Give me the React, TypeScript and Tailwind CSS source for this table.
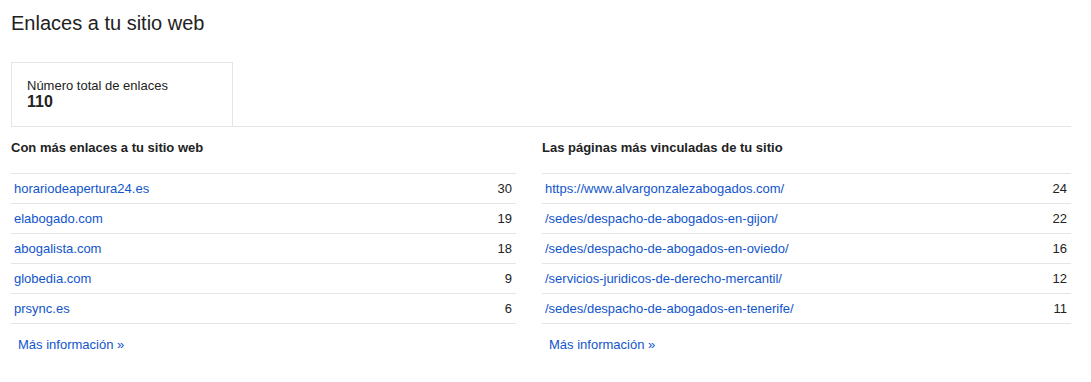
const linkingSites = [
  { name: "horariodeapertura24.es", count: 30 },
  { name: "elabogado.com", count: 19 },
  { name: "abogalista.com", count: 18 },
  { name: "globedia.com", count: 9 },
  { name: "prsync.es", count: 6 },
]

const linkedPages = [
  { name: "https://www.alvargonzalezabogados.com/", count: 24 },
  { name: "/sedes/despacho-de-abogados-en-gijon/", count: 22 },
  { name: "/sedes/despacho-de-abogados-en-oviedo/", count: 16 },
  { name: "/servicios-juridicos-de-derecho-mercantil/", count: 12 },
  { name: "/sedes/despacho-de-abogados-en-tenerife/", count: 11 },
]

type Row = { name: string; count: number }

function LinkTable({ title, rows, className }: { title: string; rows: Row[]; className: string }) {
  return (
    <div className={className}>
      <h3 className="text-[13px] leading-[15px] font-bold text-[#222]">{title}</h3>
      <div className="mt-[18px] border-b border-[#e5e5e5]">
        {rows.map((row) => (
          <div
            key={row.name}
            className="flex h-[30px] items-center justify-between border-t border-[#e5e5e5] pl-[3px] pr-[4px] text-[13px] leading-[15px]"
          >
            <a href="#" className="text-[#1155cc]">
              {row.name}
            </a>
            <span className="text-[#222]">{row.count}</span>
          </div>
        ))}
      </div>
      <a href="#" className="mt-[13px] ml-[7px] block text-[13px] leading-[15px] text-[#1155cc]">
        Más información »
      </a>
    </div>
  )
}

export default function App() {
  return (
    <div
      className="min-h-[382px] bg-white pt-[11px] pl-[11px] pr-[20px]"
      style={{ fontFamily: '"Liberation Sans", Arial, sans-serif' }}
    >
      <h2 className="text-[20px] leading-[24px] text-[#222]">Enlaces a tu sitio web</h2>

      {/* Total */}
      <div className="mt-[27px] border-b border-[#e5e5e5]">
        <div className="w-[222px] border-x border-t border-[#e5e5e5] px-[15px] pt-[15px] pb-[15px]">
          <div className="text-[13px] leading-[15px] text-[#222]">Número total de enlaces</div>
          <div className="text-[16px] leading-[18px] font-bold text-[#222]">110</div>
        </div>
      </div>

      {/* Tables */}
      <div className="mt-[13px] flex gap-[26px]">
        <LinkTable title="Con más enlaces a tu sitio web" rows={linkingSites} className="w-[505px]" />
        <LinkTable title="Las páginas más vinculadas de tu sitio" rows={linkedPages} className="flex-1" />
      </div>
    </div>
  )
}
